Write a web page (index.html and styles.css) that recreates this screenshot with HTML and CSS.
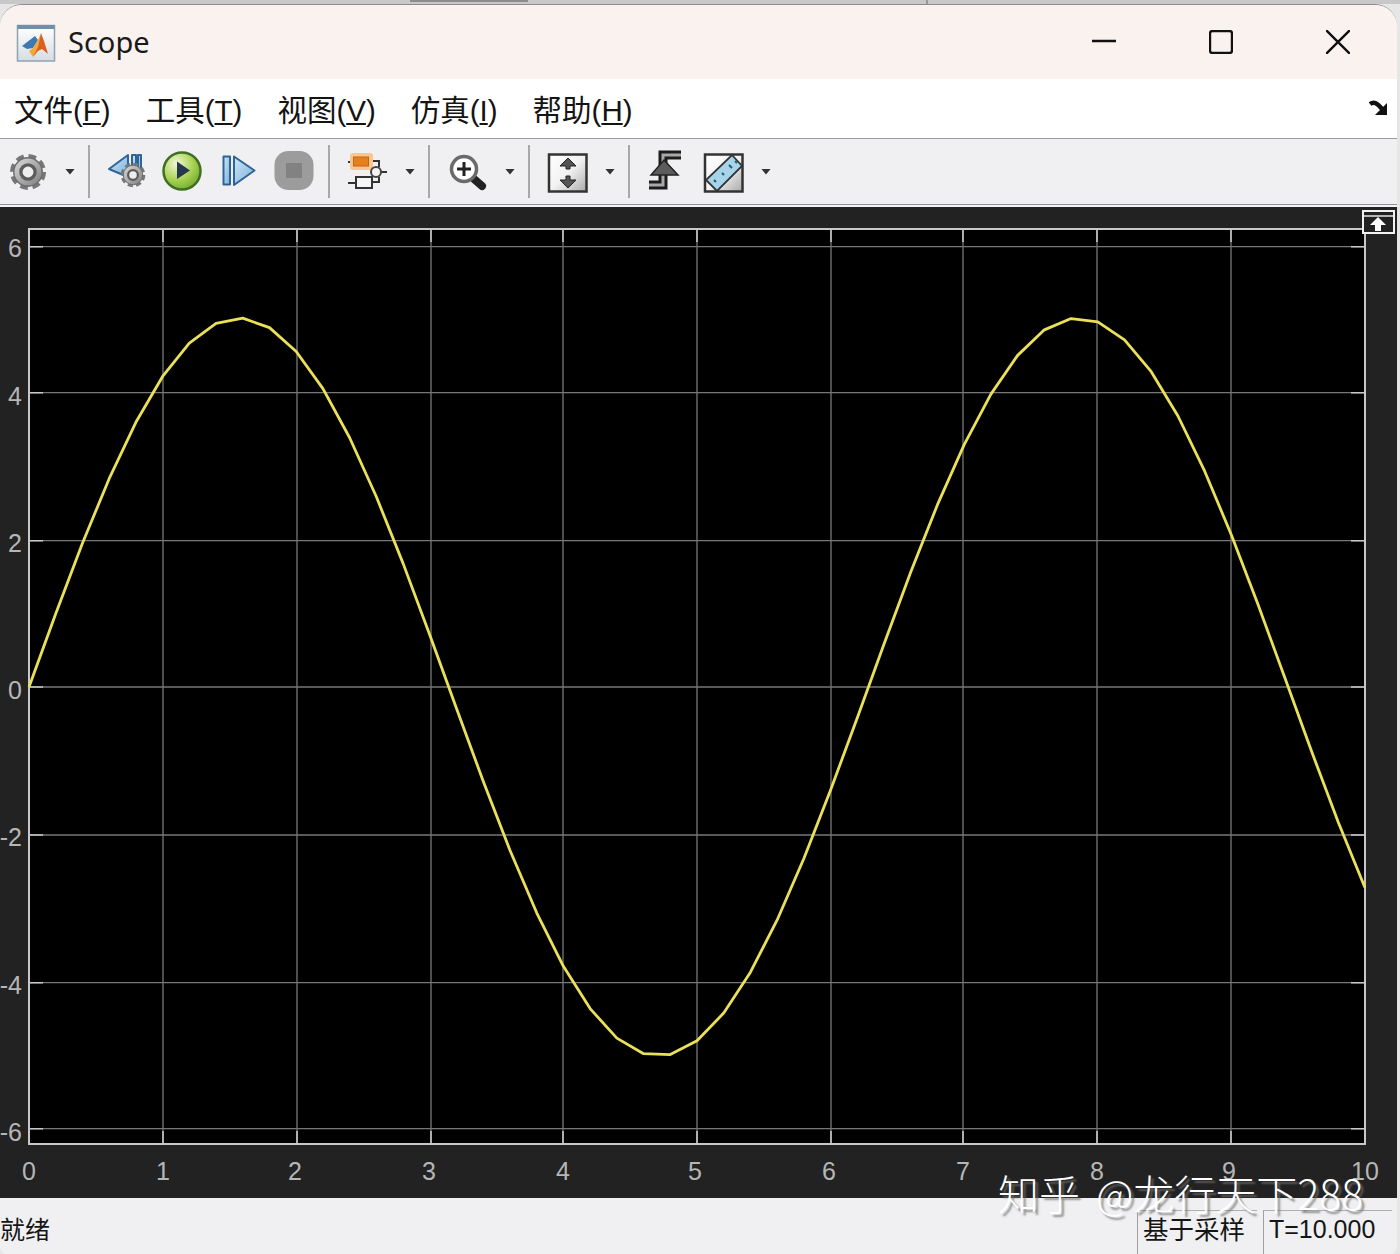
FILE: index.html
```html
<!DOCTYPE html>
<html lang="zh-CN">
<head>
<meta charset="utf-8">
<title>Scope</title>
<link rel="stylesheet" href="styles.css">
</head>
<body>
<svg class="defs" width="0" height="0" aria-hidden="true">
  <defs>
    <linearGradient id="gearFill" x1="0" y1="0" x2="1" y2="1">
      <stop offset="0" stop-color="#dcdcdc"/><stop offset="1" stop-color="#7c7c7c"/>
    </linearGradient>
    <radialGradient id="playFill" cx=".35" cy=".3" r=".8">
      <stop offset="0" stop-color="#f2f8d8"/><stop offset=".55" stop-color="#a9d353"/><stop offset="1" stop-color="#6ea52a"/>
    </radialGradient>
    <linearGradient id="blueFill" x1="0" y1="0" x2="1" y2="1">
      <stop offset="0" stop-color="#d0e6f5"/><stop offset="1" stop-color="#78b2dc"/>
    </linearGradient>
    <linearGradient id="boxFill" x1="0" y1="0" x2="1" y2="1">
      <stop offset="0" stop-color="#fff"/><stop offset=".5" stop-color="#f2f2f2"/><stop offset="1" stop-color="#aaa"/>
    </linearGradient>
    <linearGradient id="logoBox" x1="0" y1="0" x2="0" y2="1">
      <stop offset="0" stop-color="#fff"/><stop offset="1" stop-color="#d6dde4"/>
    </linearGradient>
    <symbol id="gear" viewBox="0 0 40 40">
      <circle class="gear-teeth" cx="20" cy="20" r="16.5"/>
      <circle class="gear-body" cx="20" cy="20" r="15"/>
      <circle class="gear-ring" cx="20" cy="20" r="7.5"/>
    </symbol>
  </defs>
</svg>
<div class="top-strip"></div>
<div class="window">
  <header class="titlebar">
    <svg class="app-icon" viewBox="16 23 40 38" width="40" height="38" aria-hidden="true">
      <rect class="logo-box" x="17.5" y="24.5" width="37" height="35.5"/>
      <rect class="logo-bar" x="17.5" y="24" width="37" height="4"/>
      <path class="logo-blue" d="M22 45 35 35 38 39 33 47 27 48Z"/>
      <path class="logo-yellow" d="M33 47 38 39 41 32 38 48 33 56 29 50Z"/>
      <path class="logo-orange" d="M41 32 44 40 48 53 42 48 38 50 33 56 38 46Z"/>
    </svg>
    <span class="title-text">Scope</span>
    <div class="win-controls">
      <button class="win-btn" aria-label="minimize"><svg viewBox="0 0 24 24" width="24" height="24"><path class="win-stroke" d="M0 11H24"/></svg></button>
      <button class="win-btn" aria-label="maximize"><svg viewBox="0 0 24 24" width="24" height="24"><rect class="win-stroke" x="1" y="1" width="22" height="22" rx="2.5"/></svg></button>
      <button class="win-btn" aria-label="close"><svg viewBox="0 0 24 24" width="24" height="24"><path class="win-stroke" d="M0 0 24 24M24 0 0 24"/></svg></button>
    </div>
  </header>

  <nav class="menubar">
    <span class="menu-item">文件(<u>F</u>)</span>
    <span class="menu-item">工具(<u>T</u>)</span>
    <span class="menu-item">视图(<u>V</u>)</span>
    <span class="menu-item">仿真(<u>I</u>)</span>
    <span class="menu-item">帮助(<u>H</u>)</span>
    <svg class="dock-arrow" viewBox="0 0 20 16" width="20" height="16" aria-hidden="true">
      <path class="dock-shaft" d="M1 4C5 1 8 3 14 10"/>
      <path class="dock-head" d="M18 3V15H6Z"/>
    </svg>
  </nav>

  <div class="toolbar">
    <div class="tool-group first">
      <svg class="tool" viewBox="8 147 40 48" aria-hidden="true"><use href="#gear" x="9" y="152" width="38" height="38"/></svg>
      <span class="caret"></span>
    </div>
    <span class="sep"></span>
    <div class="tool-group">
      <svg class="tool" viewBox="107 147 40 48" aria-hidden="true">
        <path class="blue-shape" d="M109 168 128 154V176Z"/>
        <path class="blue-shape" d="M132 154H136V170H132ZM138 154H141V170H138Z"/>
        <use href="#gear" x="120" y="161" width="26" height="26"/>
      </svg>
      <svg class="tool" viewBox="163 147 40 48" aria-hidden="true">
        <circle class="play-disc" cx="182" cy="170" r="18.5"/>
        <path class="play-tri" d="M177 160.500 190 169.500 177 178Z"/>
      </svg>
      <svg class="tool" viewBox="219 147 40 48" aria-hidden="true">
        <rect class="blue-shape" x="223.500" y="155.500" width="6.500" height="28"/>
        <path class="blue-shape" d="M234 155.500 254.500 169.500 234 184Z"/>
      </svg>
      <svg class="tool" viewBox="275 147 40 48" aria-hidden="true">
        <rect class="stop-disc" x="274.500" y="150" width="39" height="39" rx="14"/>
        <rect class="stop-square" x="286" y="162" width="16" height="15"/>
      </svg>
    </div>
    <span class="sep"></span>
    <div class="tool-group">
      <svg class="tool" viewBox="347 147 40 48" aria-hidden="true">
        <path class="wire" d="M348 161H353M370 160H379V166M348 182H356M372 181H379V176M381 171H387"/>
        <rect class="orange-glow" x="350" y="152" width="23" height="17" rx="3"/>
        <rect class="orange-block" x="353.500" y="156" width="15" height="9"/>
        <circle class="node" cx="376" cy="171" r="5"/>
        <rect class="white-block" x="356" y="176" width="16" height="11"/>
      </svg>
      <span class="caret"></span>
    </div>
    <span class="sep"></span>
    <div class="tool-group">
      <svg class="tool" viewBox="447 147 40 48" aria-hidden="true">
        <path class="lens-handle" d="M474 178 482 185"/>
        <circle class="lens" cx="464" cy="168" r="12.500"/>
        <path class="lens-plus" d="M457 168H471M464 161V175"/>
      </svg>
      <span class="caret"></span>
    </div>
    <span class="sep"></span>
    <div class="tool-group">
      <svg class="tool" viewBox="547 147 40 48" aria-hidden="true">
        <rect class="icon-box" x="549" y="153.500" width="37.500" height="37"/>
        <path class="fit-arrow" d="M568 157 576 165H570V168H566V165H560Z"/>
        <path class="fit-arrow" d="M568 187 576 179H570V175H566V179H560Z"/>
      </svg>
      <span class="caret"></span>
    </div>
    <span class="sep"></span>
    <div class="tool-group">
      <svg class="tool" viewBox="647 147 40 48" aria-hidden="true">
        <path class="step-outer" d="M681 154H663V184H649"/>
        <path class="step-inner" d="M681 154H663V184H649"/>
        <path class="step-head" d="M664 159 678 174H651Z"/>
      </svg>
      <svg class="tool" viewBox="703 147 40 48" aria-hidden="true">
        <rect class="icon-box" x="705" y="153.500" width="37.500" height="37"/>
        <path class="ruler" d="M732 154 742 165 717 190 706 179Z"/>
        <path class="ruler-ticks" d="M714 179 716 181M722 172 724 174M729 164 732 167M735 160 737 162"/>
      </svg>
      <span class="caret"></span>
    </div>
  </div>

  <main class="plot">
    <svg class="plot-svg" viewBox="0 207 1397 991" aria-label="Scope plot">
      <rect class="axes-bg" x="29" y="229" width="1336" height="915"/>
      <path class="grid" d="M163 229V1144M297 229V1144M431 229V1144M563 229V1144M697 229V1144M831 229V1144M963 229V1144M1097 229V1144M1231 229V1144M29 246.700H1365M29 392.700H1365M29 540.700H1365M29 687H1365M29 835H1365M29 982.700H1365M29 1128.700H1365"/>
      <path class="ticks" d="M163 229V242M297 229V242M431 229V242M563 229V242M697 229V242M831 229V242M963 229V242M1097 229V242M1231 229V242M163 1144V1131M297 1144V1131M431 1144V1131M563 1144V1131M697 1144V1131M831 1144V1131M963 1144V1131M1097 1144V1131M1231 1144V1131M29 246.700H43M29 392.700H43M29 540.700H43M29 687H43M29 835H43M29 982.700H43M29 1128.700H43M1365 246.700H1351M1365 392.700H1351M1365 540.700H1351M1365 687H1351M1365 835H1351M1365 982.700H1351M1365 1128.700H1351"/>
      <rect class="axes-box" x="29" y="229" width="1336" height="915"/>
      <polyline class="curve" transform="translate(29 687) scale(133.6 -369)" points="0,0 .2,.1987 .4,.3894 .6,.5646 .8,.7174 1,.8415 1.2,.932 1.4,.9854 1.6,.9996 1.8,.9738 2,.9093 2.2,.8085 2.4,.6755 2.6,.5155 2.8,.335 3,.1411 3.2,-.0584 3.4,-.2555 3.6,-.4425 3.8,-.6119 4,-.7568 4.2,-.8716 4.4,-.9516 4.6,-.9937 4.8,-.9962 5,-.9589 5.2,-.8835 5.4,-.7728 5.6,-.6313 5.8,-.4646 6,-.2794 6.2,-.0831 6.4,.1165 6.6,.3115 6.8,.4941 7,.657 7.2,.7937 7.4,.8987 7.6,.9679 7.8,.9985 8,.9894 8.2,.9407 8.4,.8546 8.6,.7344 8.8,.5849 9,.4121 9.2,.2229 9.4,.0248 9.6,-.1743 9.8,-.3665 10,-.544"/>
      <g class="y-labels">
        <text x="22" y="257">6</text>
        <text x="22" y="405">4</text>
        <text x="22" y="552">2</text>
        <text x="22" y="699">0</text>
        <text x="22" y="846">-2</text>
        <text x="22" y="994">-4</text>
        <text x="22" y="1141">-6</text>
      </g>
      <g class="x-labels">
        <text x="29" y="1180">0</text>
        <text x="163" y="1180">1</text>
        <text x="295" y="1180">2</text>
        <text x="429" y="1180">3</text>
        <text x="563" y="1180">4</text>
        <text x="695" y="1180">5</text>
        <text x="829" y="1180">6</text>
        <text x="963" y="1180">7</text>
        <text x="1097" y="1180">8</text>
        <text x="1229" y="1180">9</text>
        <text x="1365" y="1180">10</text>
      </g>
      <rect class="expand-box" x="1363" y="211" width="31" height="22"/>
      <path class="expand-line" d="M1364 216H1393"/>
      <path class="expand-arrow" d="M1378 217 1386 225H1381V231H1375V225H1370Z"/>
    </svg>
  </main>

  <footer class="statusbar">
    <span class="status-text">就绪</span>
    <span class="status-box mode">基于采样</span>
    <span class="status-box time">T=10.000</span>
  </footer>

  <div class="watermark">知乎 @龙行天下288</div>
</div>
</body>
</html>
```

FILE: styles.css
```css
* { box-sizing: border-box; }

html, body {
  margin: 0;
  padding: 0;
  width: 1400px;
  height: 1254px;
  overflow: hidden;
  background: #e6e6e6;
  font-family: "Noto Sans CJK SC", "Noto Sans", sans-serif;
  color: #111;
}

.defs { position: absolute; }

.top-strip {
  height: 4px;
  background:
    linear-gradient(#8c8c8c, #8c8c8c) 410px 0 / 118px 2px no-repeat,
    linear-gradient(#9a9a9a, #9a9a9a) 926px 0 / 2px 4px no-repeat,
    #c8c8c8;
}

.window {
  position: relative;
  width: 1397px;
  height: 1250px;
  display: flex;
  flex-direction: column;
  background: #f4f4f4;
  border-top: 1px solid #8c8c8c;
  border-radius: 22px 22px 8px 8px;
  overflow: hidden;
}

/* Title bar */
.titlebar {
  height: 74px;
  flex: none;
  display: flex;
  align-items: center;
  padding: 0 1px 0 16px;
  background: #f9f2ee;
}
.app-icon { flex: none; margin-top: 1px; }
.title-text {
  margin: -2px 0 0 12px;
  font-family: "Noto Sans", sans-serif;
  font-size: 29px;
  line-height: 1;
  color: #1a1a1a;
}
.win-controls { display: flex; margin-left: auto; }
.win-btn {
  width: 117px;
  height: 60px;
  padding: 0;
  border: 0;
  background: none;
  display: flex;
  align-items: center;
  justify-content: center;
}
.win-stroke { fill: none; stroke: #111; stroke-width: 2.400; }

/* Menu bar */
.menubar {
  height: 60px;
  flex: none;
  display: flex;
  align-items: center;
  gap: 35px;
  padding: 0 8px 0 14px;
  background: #fff;
  border-bottom: 1px solid #9a9a9a;
}
.menu-item {
  margin-top: 4px;
  font-family: "Liberation Sans", "Noto Sans CJK SC", sans-serif;
  font-size: 29.500px;
  line-height: 1;
  color: #141414;
  white-space: nowrap;
}
.dock-arrow { margin-left: auto; margin-top: -1px; }
.dock-shaft { fill: none; stroke: #111; stroke-width: 4.500; }
.dock-head { fill: #111; }

/* Toolbar */
.toolbar {
  height: 66px;
  flex: none;
  display: flex;
  align-items: center;
  background: #f0f0f2;
  border-bottom: 1px solid #8f8f8f;
}
.tool-group {
  display: flex;
  align-items: center;
  gap: 16px;
  padding: 0 13px 0 17px;
  height: 100%;
}
.tool-group.first { padding-left: 8px; gap: 0; }
.tool-group.first .caret { margin-left: 17px; }
.tool { flex: none; width: 40px; height: 48px; overflow: visible; }
.caret {
  flex: none;
  width: 10px;
  height: 6px;
  margin-left: 2px;
  background: #333;
  clip-path: polygon(0 0, 100% 0, 50% 100%);
}
.sep {
  flex: none;
  width: 2px;
  height: 53px;
  background: #a8a8a8;
}

/* Toolbar icon pieces */
.gear-teeth { fill: none; stroke: #777; stroke-width: 5; stroke-dasharray: 8 4.960; }
.gear-body { fill: url(#gearFill); stroke: #6c6c6c; stroke-width: 1.500; }
.gear-ring { fill: #eee; stroke: #5c5c5c; stroke-width: 3.500; }
.blue-shape { fill: url(#blueFill); stroke: #2f6596; stroke-width: 2; stroke-linejoin: round; }
.play-disc { fill: url(#playFill); stroke: #3f6f24; stroke-width: 2.500; }
.play-tri { fill: #26384c; }
.stop-disc { fill: #9c9c9c; }
.stop-square { fill: #828282; }
.wire { fill: none; stroke: #333; stroke-width: 2; }
.orange-glow { fill: #f8c68e; }
.orange-block { fill: #e87f1e; stroke: #c4650f; stroke-width: 1; }
.node { fill: #f4f4f4; stroke: #444; stroke-width: 2; }
.white-block { fill: #f6f6f6; stroke: #333; stroke-width: 2; }
.lens { fill: #fff; stroke: #6a6a6a; stroke-width: 3.500; }
.lens-handle { fill: none; stroke: #222; stroke-width: 8; stroke-linecap: round; }
.lens-plus { fill: none; stroke: #222; stroke-width: 3; }
.icon-box { fill: url(#boxFill); stroke: #333; stroke-width: 2.500; }
.fit-arrow { fill: #555; stroke: #222; stroke-width: 1; }
.step-outer { fill: none; stroke: #1c1c1c; stroke-width: 9; }
.step-inner { fill: none; stroke: #a8a8a8; stroke-width: 3; }
.step-head { fill: #5c5c5c; stroke: #222; stroke-width: 1.500; }
.ruler { fill: #a6d4ea; stroke: #333; stroke-width: 1.800; }
.ruler-ticks { fill: none; stroke: #35566a; stroke-width: 2; }

/* App icon */
.logo-box { fill: url(#logoBox); stroke: #8fa2b2; stroke-width: 1.500; }
.logo-bar { fill: #6f90aa; }
.logo-blue { fill: #3d78b4; }
.logo-yellow { fill: #f0a93a; }
.logo-orange { fill: #d9601e; }

/* Plot */
.plot {
  height: 991px;
  flex: none;
  margin-top: 2px;
  background: #222;
}
.plot-svg { display: block; width: 1397px; height: 991px; }
.axes-bg { fill: #000; }
.grid { fill: none; stroke: #777; stroke-width: 1.300; }
.ticks { fill: none; stroke: #c8c8c8; stroke-width: 1.600; }
.axes-box { fill: none; stroke: #c8c8c8; stroke-width: 2; }
.curve {
  fill: none;
  stroke: #ebe158;
  stroke-width: 2.800;
  vector-effect: non-scaling-stroke;
  stroke-linejoin: round;
}
.y-labels, .x-labels {
  font-family: "Liberation Sans", Arial, sans-serif;
  font-size: 25px;
  fill: #b6b6b6;
}
.y-labels { text-anchor: end; }
.x-labels { text-anchor: middle; }
.expand-box { fill: #222; stroke: #f2f2f2; stroke-width: 2; }
.expand-line { fill: none; stroke: #e8e8e8; stroke-width: 1.500; }
.expand-arrow { fill: #fff; }

/* Status bar */
.statusbar {
  flex: 1;
  min-height: 0;
  display: flex;
  align-items: stretch;
  background: #f0f0f2;
  padding-right: 5px;
}
.status-text {
  align-self: center;
  margin-top: 4px;
  font-size: 25px;
  line-height: 1;
  color: #151515;
}
.status-box {
  margin-top: 12px;
  padding-bottom: 7px;
  display: flex;
  align-items: center;
  border-top: 1px solid #b0b0b0;
  border-left: 1px solid #a0a0a0;
  color: #151515;
}
.mode {
  margin-left: auto;
  width: 120px;
  padding-left: 5px;
  padding-bottom: 11px;
  font-size: 25.500px;
}
.time {
  margin-left: 6px;
  width: 129px;
  padding-left: 5px;
  font-family: "Liberation Sans", Arial, sans-serif;
  font-size: 25px;
}

/* Watermark over the plot and the status bar */
.watermark {
  position: absolute;
  left: 998px;
  top: 1163px;
  font-size: 41px;
  font-weight: 300;
  line-height: 1.200;
  word-spacing: 7px;
  white-space: nowrap;
  color: #fff;
  text-shadow: 3px 3px 2px rgba(110, 110, 110, .75);
}
```
